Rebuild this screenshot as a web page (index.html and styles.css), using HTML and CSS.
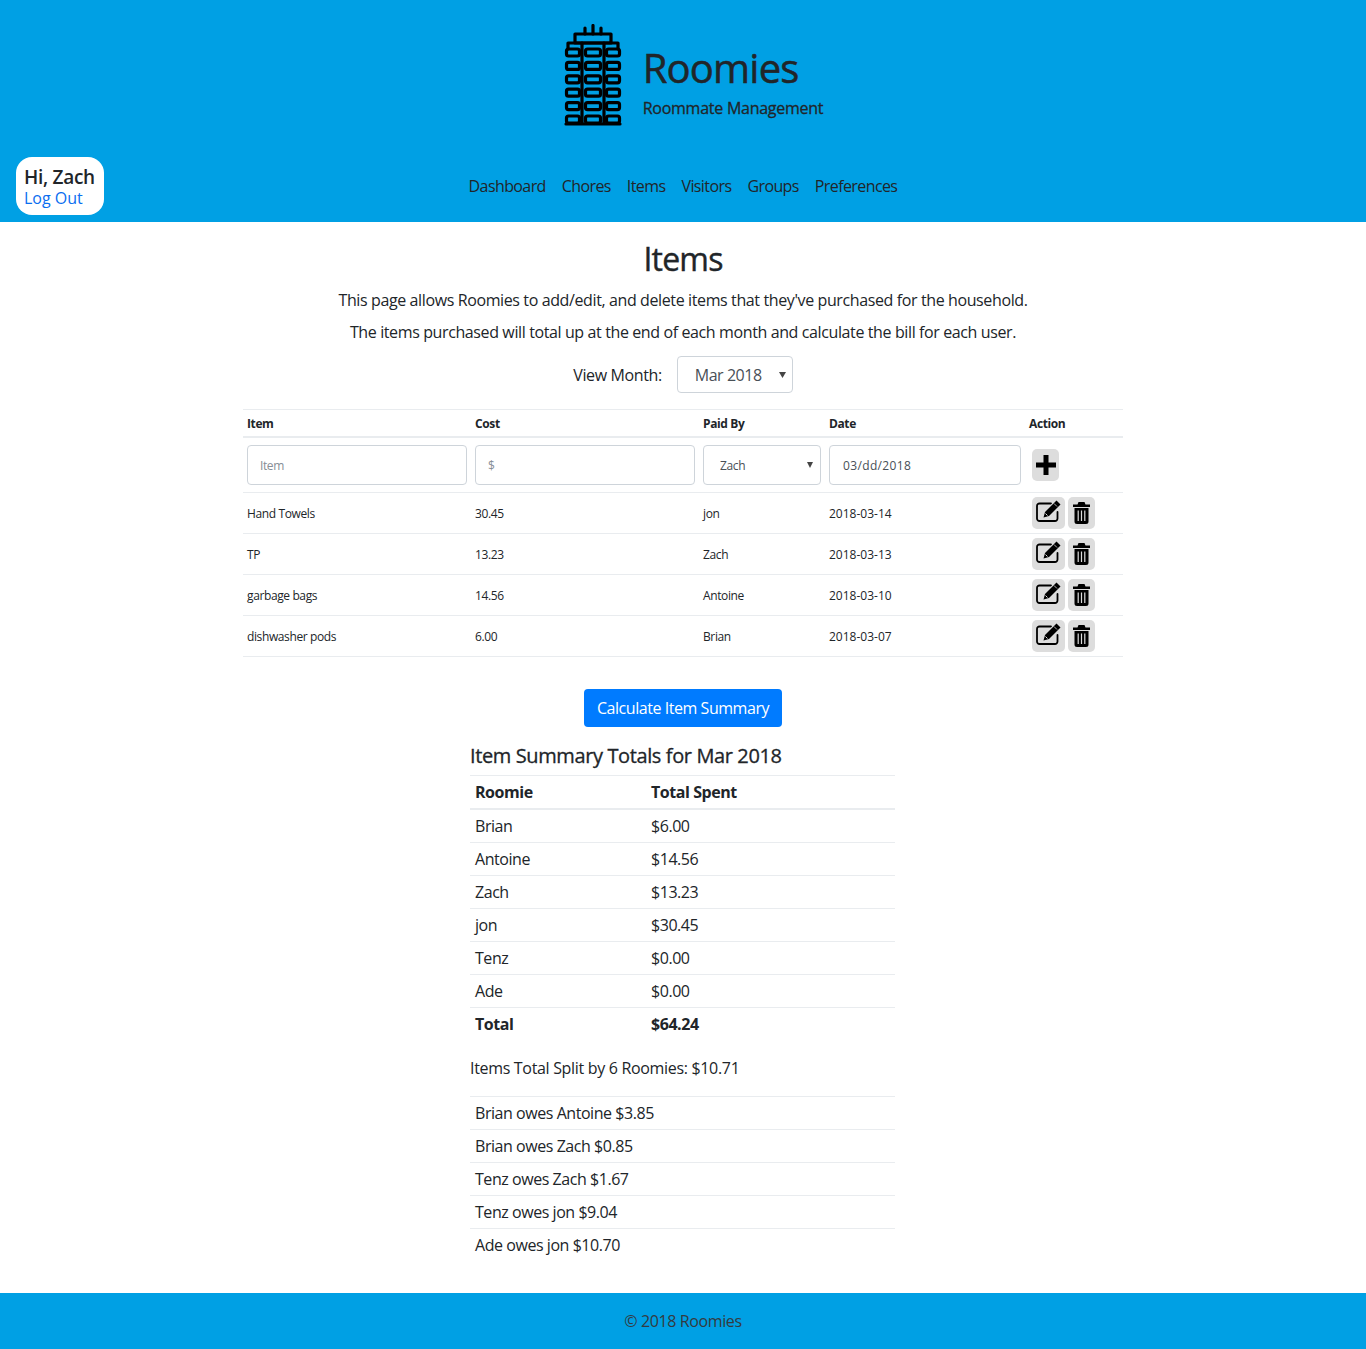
FILE: index.html
```html
<!DOCTYPE html>
<html lang="en">
<head>
    <meta charset="UTF-8">
    <meta name="viewport" content="width=device-width, initial-scale=1.0">
    <title>Roomies - Items</title>
    <link rel="stylesheet" href="styles.css">
</head>
<body>
    <!-- icons used in the table rows -->
    <svg class="icon-defs" width="0" height="0">
        <symbol id="icon-edit" viewBox="0 0 25 23">
            <path d="M21.500 12v6.500a2.500 2.500 0 0 1-2.500 2.500H3.500A2.500 2.500 0 0 1 1 18.500V6a2.500 2.500 0 0 1 2.500-2.500H15" fill="none" stroke="#000" stroke-width="1.8" stroke-linecap="round"/>
            <path d="M20.500 .5l4 4-11.500 11.500-5.500 1.500 1.500-5.500z" fill="#000" stroke="#ddd" stroke-width="1.6" paint-order="stroke"/>
            <path d="M18 3.500l3 3" stroke="#ddd" stroke-width=".8"/>
            <path d="M9.500 13.500l2 2" stroke="#ddd" stroke-width="1"/>
        </symbol>
        <symbol id="icon-trash" viewBox="0 0 17 22">
            <path d="M5.500 0h6l1 2.500H17v2.500H0V2.500h4.500zM1.500 6h14v13.500a2.500 2.500 0 0 1-2.500 2.500H4a2.500 2.500 0 0 1-2.500-2.500z" fill="#000"/>
            <path d="M5.200 8.500v10.500M8.500 8.500v10.500M11.800 8.500v10.500" stroke="#ddd" stroke-width="1.2"/>
        </symbol>
    </svg>

    <header class="site-header">
        <div class="brand">
            <svg class="brand-icon" width="60" height="102" viewBox="0 0 60 102" fill="none" stroke="#000" stroke-width="3.2" stroke-linejoin="round" stroke-linecap="round">
                <path d="M30 1.500V10M22 4V10M38 4V10"/>
                <rect x="12" y="10" width="36" height="9"/>
                <path d="M5 25V19H55V25"/>
                <g id="floor">
                    <rect x="3.500" y="25" width="13" height="7" rx="2"/>
                    <rect x="22.500" y="25" width="15" height="7" rx="2"/>
                    <rect x="43.500" y="25" width="13" height="7" rx="2"/>
                </g>
                <use href="#floor" y="13.4"/>
                <use href="#floor" y="26.8"/>
                <use href="#floor" y="40.2"/>
                <use href="#floor" y="53.6"/>
                <use href="#floor" y="67"/>
                <path d="M19 19V100M41 19V100M3 100H57"/>
            </svg>
            <div class="brand-text">
                <h1 class="brand-title">Roomies</h1>
                <p class="brand-tagline">Roommate Management</p>
            </div>
        </div>
        <div class="nav-row">
            <div class="user-box">
                <div class="user-name">Hi, Zach</div>
                <a class="user-logout" href="#">Log Out</a>
            </div>
            <nav class="main-nav">
                <a href="#">Dashboard</a>
                <a href="#">Chores</a>
                <a href="#">Items</a>
                <a href="#">Visitors</a>
                <a href="#">Groups</a>
                <a href="#">Preferences</a>
            </nav>
        </div>
    </header>

    <main class="content">
        <h2 class="page-title">Items</h2>
        <p class="intro">This page allows Roomies to add/edit, and delete items that they've purchased for the household.</p>
        <p class="intro">The items purchased will total up at the end of each month and calculate the bill for each user.</p>
        <div class="month-row">
            <label for="month">View Month:</label>
            <select id="month" class="month-select">
                <option>Mar 2018</option>
            </select>
        </div>

        <table class="items-table">
            <colgroup>
                <col class="col-item">
                <col class="col-cost">
                <col class="col-paid">
                <col class="col-date">
                <col class="col-action">
            </colgroup>
            <thead>
                <tr>
                    <th>Item</th>
                    <th>Cost</th>
                    <th>Paid By</th>
                    <th>Date</th>
                    <th>Action</th>
                </tr>
            </thead>
            <tbody>
                <tr class="add-row">
                    <td><input class="field" type="text" placeholder="Item"></td>
                    <td><input class="field" type="text" placeholder="$"></td>
                    <td>
                        <select class="field field-select">
                            <option>Zach</option>
                        </select>
                    </td>
                    <td><input class="field field-date" type="text" value="03/dd/2018"></td>
                    <td class="action-cell">
                        <div class="actions">
                            <button class="icon-btn" type="button" aria-label="Add">
                                <svg width="20" height="20" viewBox="0 0 20 20"><path d="M7.500 0h5v7.500H20v5h-7.500V20h-5v-7.500H0v-5h7.500z" fill="#000"/></svg>
                            </button>
                        </div>
                    </td>
                </tr>
                <tr>
                    <td>Hand Towels</td>
                    <td>30.45</td>
                    <td>jon</td>
                    <td class="date-cell">2018-03-14</td>
                    <td class="action-cell">
                        <div class="actions">
                            <button class="icon-btn edit-btn" type="button" aria-label="Edit"><svg class="edit-icon" width="25" height="23"><use href="#icon-edit"/></svg></button>
                            <button class="icon-btn" type="button" aria-label="Delete"><svg width="17" height="22"><use href="#icon-trash"/></svg></button>
                        </div>
                    </td>
                </tr>
                <tr>
                    <td>TP</td>
                    <td>13.23</td>
                    <td>Zach</td>
                    <td class="date-cell">2018-03-13</td>
                    <td class="action-cell">
                        <div class="actions">
                            <button class="icon-btn edit-btn" type="button" aria-label="Edit"><svg class="edit-icon" width="25" height="23"><use href="#icon-edit"/></svg></button>
                            <button class="icon-btn" type="button" aria-label="Delete"><svg width="17" height="22"><use href="#icon-trash"/></svg></button>
                        </div>
                    </td>
                </tr>
                <tr>
                    <td>garbage bags</td>
                    <td>14.56</td>
                    <td>Antoine</td>
                    <td class="date-cell">2018-03-10</td>
                    <td class="action-cell">
                        <div class="actions">
                            <button class="icon-btn edit-btn" type="button" aria-label="Edit"><svg class="edit-icon" width="25" height="23"><use href="#icon-edit"/></svg></button>
                            <button class="icon-btn" type="button" aria-label="Delete"><svg width="17" height="22"><use href="#icon-trash"/></svg></button>
                        </div>
                    </td>
                </tr>
                <tr>
                    <td>dishwasher pods</td>
                    <td>6.00</td>
                    <td>Brian</td>
                    <td class="date-cell">2018-03-07</td>
                    <td class="action-cell">
                        <div class="actions">
                            <button class="icon-btn edit-btn" type="button" aria-label="Edit"><svg class="edit-icon" width="25" height="23"><use href="#icon-edit"/></svg></button>
                            <button class="icon-btn" type="button" aria-label="Delete"><svg width="17" height="22"><use href="#icon-trash"/></svg></button>
                        </div>
                    </td>
                </tr>
            </tbody>
        </table>

        <button class="primary-btn" type="button">Calculate Item Summary</button>

        <section class="summary">
            <h3 class="summary-title">Item Summary Totals for Mar 2018</h3>
            <table class="summary-table">
                <thead>
                    <tr>
                        <th class="col-roomie">Roomie</th>
                        <th>Total Spent</th>
                    </tr>
                </thead>
                <tbody>
                    <tr><td>Brian</td><td>$6.00</td></tr>
                    <tr><td>Antoine</td><td>$14.56</td></tr>
                    <tr><td>Zach</td><td>$13.23</td></tr>
                    <tr><td>jon</td><td>$30.45</td></tr>
                    <tr><td>Tenz</td><td>$0.00</td></tr>
                    <tr><td>Ade</td><td>$0.00</td></tr>
                    <tr class="total-row"><td>Total</td><td>$64.24</td></tr>
                </tbody>
            </table>
            <p class="split-text">Items Total Split by 6 Roomies: $10.71</p>
            <table class="summary-table">
                <tbody>
                    <tr><td>Brian owes Antoine $3.85</td></tr>
                    <tr><td>Brian owes Zach $0.85</td></tr>
                    <tr><td>Tenz owes Zach $1.67</td></tr>
                    <tr><td>Tenz owes jon $9.04</td></tr>
                    <tr><td>Ade owes jon $10.70</td></tr>
                </tbody>
            </table>
        </section>
    </main>

    <footer class="site-footer">© 2018 Roomies</footer>
</body>
</html>
```

FILE: styles.css
```css
* {
    box-sizing: border-box;
}

body {
    margin: 0;
    font-family: "Open Sans", "Noto Sans", sans-serif;
    font-size: 16px;
    line-height: 1.5;
    letter-spacing: -0.024em;
    color: #212529;
    background-color: #fff;
}

.icon-defs {
    display: block;
    position: absolute;
}

.site-header {
    background-color: #00a0e4;
    padding-top: 24px;
    padding-bottom: 7px;
}

.brand {
    display: flex;
    justify-content: center;
    align-items: center;
    gap: 20px;
    padding-left: 20px;
}

.brand-text {
    padding-top: 13px;
}

.brand-title {
    margin: 0;
    font-size: 40px;
    font-weight: 400;
    line-height: 48px;
    letter-spacing: -0.02em;
    color: #212529;
    -webkit-text-stroke: 0.5px #212529;
}

.brand-tagline {
    margin: 4px 0 0;
    font-size: 16px;
    font-weight: 400;
    line-height: 24px;
    letter-spacing: -0.016em;
    -webkit-text-stroke: 0.3px #212529;
}

.nav-row {
    display: grid;
    grid-template-columns: 1fr auto 1fr;
    align-items: center;
    margin-top: 31px;
    padding-left: 16px;
    padding-right: 16px;
}

.user-box {
    justify-self: start;
    width: 88px;
    height: 58px;
    padding: 8px 8px 0;
    background-color: #fff;
    border-radius: 16px;
}

.user-name {
    font-size: 19px;
    font-weight: 600;
    line-height: 24px;
    letter-spacing: -0.015em;
}

.user-logout {
    display: block;
    line-height: 19px;
    letter-spacing: 0;
    color: #0a6ef0;
    text-decoration: none;
}

.main-nav {
    display: flex;
    gap: 16px;
    letter-spacing: -0.0375em;
}

.main-nav a {
    color: #212529;
    text-decoration: none;
}

.content {
    width: 880px;
    margin: 0 auto;
    padding-top: 18px;
    text-align: center;
}

.page-title {
    margin: 0 0 10px;
    font-size: 32px;
    font-weight: 400;
    line-height: 38px;
    letter-spacing: -0.025em;
    -webkit-text-stroke: 0.4px #212529;
}

.intro {
    margin: 0 0 8px;
}

.month-row {
    display: flex;
    justify-content: center;
    align-items: center;
    gap: 15px;
    margin-top: 12px;
    margin-bottom: 16px;
}

.month-select {
    width: 116px;
    height: 37px;
    padding: 0 17px;
    font: inherit;
    letter-spacing: -0.028em;
    color: #495057;
    background: #fff url("data:image/svg+xml,%3Csvg xmlns='http://www.w3.org/2000/svg' width='7' height='6'%3E%3Cpath d='M0 0h7L3.500 6z' fill='%23444'/%3E%3C/svg%3E") no-repeat right 6px center;
    border: 1px solid #ced4da;
    border-radius: 4px;
    appearance: none;
}

.items-table {
    width: 880px;
    table-layout: fixed;
    border-collapse: collapse;
    font-size: 12px;
    text-align: left;
}

.col-item, .col-cost {
    width: 228px;
}

.col-paid {
    width: 126px;
}

.col-date {
    width: 200px;
}

.col-action {
    width: 98px;
}

.items-table th, .items-table td {
    padding: 5px 4px 3px;
    border-top: 1px solid #e9ecef;
}

.items-table .action-cell {
    padding-top: 4px;
    padding-bottom: 4px;
}

.items-table th {
    font-weight: 700;
    border-bottom: 2px solid #e9ecef;
}

.items-table tbody tr:last-child td {
    border-bottom: 1px solid #e9ecef;
}

.items-table .add-row td {
    padding-top: 7px;
    padding-bottom: 7px;
}

.date-cell {
    letter-spacing: 0;
}

.field {
    display: block;
    width: 100%;
    height: 40px;
    padding: 0 12px;
    font: inherit;
    letter-spacing: inherit;
    color: #495057;
    background-color: #fff;
    border: 1px solid #ced4da;
    border-radius: 4px;
}

.field::placeholder {
    color: #868e96;
}

.field-select {
    padding-left: 16px;
    padding-top: 2px;
    background: #fff url("data:image/svg+xml,%3Csvg xmlns='http://www.w3.org/2000/svg' width='6' height='6'%3E%3Cpath d='M0 0h6L3 6z' fill='%23444'/%3E%3C/svg%3E") no-repeat right 7px center;
    appearance: none;
}

.field-date {
    padding-left: 13px;
    letter-spacing: 0.03em;
}

.actions {
    display: flex;
    gap: 3px;
    padding-left: 3px;
}

.icon-btn {
    display: flex;
    justify-content: center;
    align-items: center;
    width: 27px;
    height: 32px;
    padding: 0;
    background-color: #ddd;
    border: none;
    border-radius: 5px;
}

.edit-btn {
    width: 33px;
}

.edit-icon {
    margin-bottom: 3px;
}

.primary-btn {
    display: block;
    width: 198px;
    height: 38px;
    margin: 32px auto 0;
    padding: 0;
    font: inherit;
    letter-spacing: -0.028em;
    color: #fff;
    background-color: #007bff;
    border: none;
    border-radius: 4px;
}

.summary {
    width: 425px;
    margin: 17px auto 32px 227px;
    text-align: left;
}

.summary-title {
    margin: 0 0 7px;
    font-size: 20px;
    font-weight: 400;
    line-height: 24px;
    -webkit-text-stroke: 0.3px #212529;
}

.summary-table {
    width: 100%;
    border-collapse: collapse;
    letter-spacing: -0.028em;
}

.summary-table th, .summary-table td {
    padding: 4px 4px 4px 5px;
    border-top: 1px solid #e9ecef;
    text-align: left;
}

.summary-table th {
    font-weight: 700;
    border-bottom: 2px solid #e9ecef;
}

.col-roomie {
    width: 176px;
}

.total-row td {
    font-weight: 700;
}

.split-text {
    margin: 16px 0;
    letter-spacing: -0.02em;
}

.site-footer {
    height: 56px;
    line-height: 56px;
    text-align: center;
    color: #343a40;
    background-color: #00a0e4;
}
```
